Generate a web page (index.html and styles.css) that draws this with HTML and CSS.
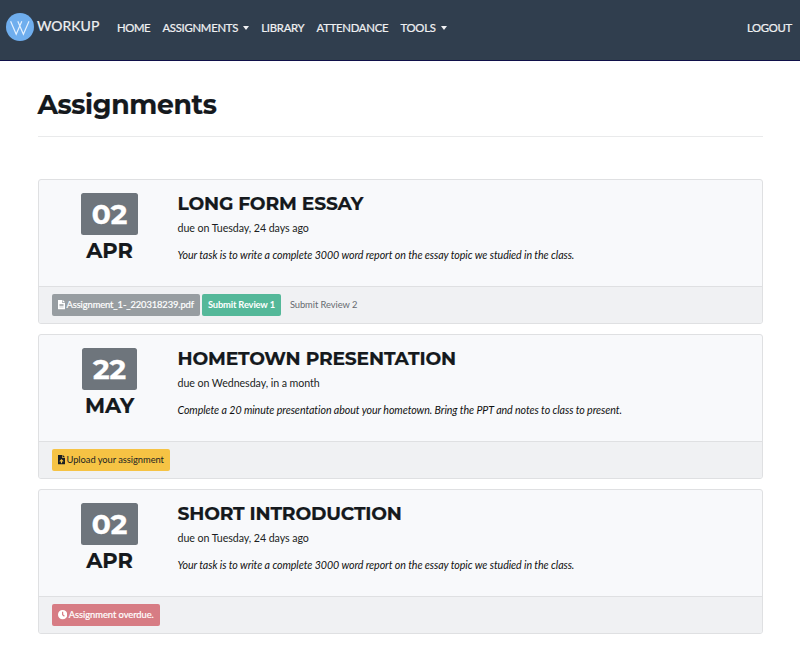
FILE: index.html
```html
<!DOCTYPE html>
<html lang="en">
<head>
<meta charset="utf-8">
<title>Workup - Assignments</title>
<link rel="stylesheet" href="styles.css">
</head>
<body>
<nav class="navbar">
  <a class="brand">
    <svg class="logo" viewBox="0 0 28 28"><circle cx="14" cy="14" r="14"/><path d="M4.6 8.3 10.2 21.2 15.8 8.3M11.8 8.3 17.4 21.2 23 8.3"/></svg>
    <span class="brand-name">WORKUP</span>
  </a>
  <div class="links">
    <a class="home">HOME</a>
    <a class="dropdown">ASSIGNMENTS</a>
    <a>LIBRARY</a>
    <a>ATTENDANCE</a>
    <a class="dropdown">TOOLS</a>
  </div>
  <a class="logout">LOGOUT</a>
</nav>
<main>
  <h1>Assignments</h1>
  <section class="card">
    <div class="card-body">
      <div class="date"><span class="day">02</span><span class="month">APR</span></div>
      <div class="info">
        <h2>LONG FORM ESSAY</h2>
        <p class="due">due on Tuesday, 24 days ago</p>
        <p class="task">Your task is to write a complete 3000 word report on the essay topic we studied in the class.</p>
      </div>
    </div>
    <div class="card-footer">
      <a class="btn file"><svg class="icon" viewBox="0 0 384 512"><path fill-rule="evenodd" d="M224 136V0H24C10 0 0 10 0 24v464c0 14 10 24 24 24h336c14 0 24-10 24-24V160H248c-14 0-24-10-24-24zM80 224h224v40H80zm0 70h224v40H80zm0 70h224v40H80zM384 122v6H256V0h6c7 0 13 3 17 7l98 98c4 4 7 10 7 17z"/></svg>Assignment_1-_220318239.pdf</a>
      <a class="btn review">Submit Review 1</a>
      <a class="btn plain">Submit Review 2</a>
    </div>
  </section>
  <section class="card">
    <div class="card-body">
      <div class="date"><span class="day narrow">22</span><span class="month">MAY</span></div>
      <div class="info">
        <h2>HOMETOWN PRESENTATION</h2>
        <p class="due">due on Wednesday, in a month</p>
        <p class="task">Complete a 20 minute presentation about your hometown. Bring the PPT and notes to class to present.</p>
      </div>
    </div>
    <div class="card-footer">
      <a class="btn upload"><svg class="icon" viewBox="0 0 384 512"><path fill-rule="evenodd" d="M224 136V0H24C10 0 0 10 0 24v464c0 14 10 24 24 24h336c14 0 24-10 24-24V160H248c-14 0-24-10-24-24zM289 352h-65v80c0 9-7 16-16 16h-32c-9 0-16-7-16-16v-80H95c-14 0-21-17-11-27l96-96c7-7 17-7 24 0l96 96c10 10 3 27-11 27zM384 122v6H256V0h6c7 0 13 3 17 7l98 98c4 4 7 10 7 17z"/></svg>Upload your assignment</a>
    </div>
  </section>
  <section class="card">
    <div class="card-body">
      <div class="date"><span class="day">02</span><span class="month">APR</span></div>
      <div class="info">
        <h2>SHORT INTRODUCTION</h2>
        <p class="due">due on Tuesday, 24 days ago</p>
        <p class="task">Your task is to write a complete 3000 word report on the essay topic we studied in the class.</p>
      </div>
    </div>
    <div class="card-footer">
      <a class="btn overdue"><svg class="icon clock" viewBox="0 0 18 18"><path fill-rule="evenodd" d="M9 0a9 9 0 1 0 0 18A9 9 0 0 0 9 0zM7.8 3.5h2.3v5.2l3 2.3-1.4 1.8-3.9-3z"/></svg>Assignment overdue.</a>
    </div>
  </section>
</main>
</body>
</html>
```
FILE: styles.css
```css
* { box-sizing: border-box; }
body { margin: 0; background: #fff; color: #1b1f23; font: 10.67px/16px Lato, sans-serif; }
h1, h2, p { margin: 0; }
h1, h2, .month, .day { font-family: Montserrat, Inter, sans-serif; font-weight: 700; color: #15191d; white-space: nowrap; -webkit-text-stroke: 0.2px currentColor; }
.navbar { height: 61px; background: #303e4e; border-bottom: 1px solid #10104a; display: flex; align-items: flex-start; padding: 13px 8px 0 6px; color: #f0f1f3; -webkit-text-stroke: 0.2px #f0f1f3; }
.brand { display: flex; width: 111px; gap: 3px; }
.logo { width: 28px; height: 28px; flex: none; }
.logo circle { fill: #6faeee; stroke: none; }
.logo path { fill: none; stroke: #e4f1ff; stroke-width: 1.2; }
.brand-name { font-size: 14px; line-height: 26px; }
.links { display: flex; gap: 12.2px; font-size: 11.33px; line-height: 30px; letter-spacing: -0.26px; flex: 1; white-space: nowrap; }
.home { letter-spacing: -0.4px; }
.logout { font-size: 11.33px; line-height: 30px; letter-spacing: -0.3px; }
.dropdown::after { content: ""; display: inline-block; margin-left: 5px; vertical-align: 2px; border: 3.5px solid transparent; border-width: 4px 3.5px 0; border-top-color: currentColor; }
main { padding: 26px 37px 0 37.5px; }
h1 { font-size: 26.67px; line-height: 36px; height: 50px; letter-spacing: -0.33px; border-bottom: 1px solid #e9eaeb; margin-bottom: 42px; }
.card { height: 145px; margin-bottom: 10px; border: 1px solid #dfe0e2; border-radius: 3px; background: #f8f9fb; overflow: hidden; }
.card-body { height: 106px; display: flex; padding: 13px 13px 0 12px; }
.date { width: 118px; margin-right: 9px; display: flex; flex-direction: column; align-items: center; }
.day { width: 57px; height: 42px; border-radius: 2.5px; background: #6e757c; color: #fff; font-size: 28px; line-height: 42px; text-align: center; -webkit-text-stroke-width: 0.4px; }
.narrow { width: 55px; }
.month { font-size: 21px; line-height: 32px; }
h2 { font-size: 18.67px; line-height: 22px; letter-spacing: -0.16px; }
.due { margin-top: 5px; letter-spacing: -0.07px; }
.task { margin-top: 11px; font-style: italic; color: #111; white-space: nowrap; letter-spacing: -0.08px; }
.card-footer { height: 38px; border-top: 1px solid #dfe0e2; background: #f0f1f3; padding: 7px 13px; display: flex; gap: 2px; }
.btn { height: 22px; padding: 0 6px; border-radius: 2px; font-size: 9.33px; line-height: 22px; color: #fff; display: flex; align-items: center; white-space: nowrap; letter-spacing: -0.04px; }
.icon { height: 9.33px; width: 7px; margin-right: 2px; fill: currentColor; flex: none; }
.clock { width: 9.33px; }
.file { background: #979da1; letter-spacing: -0.09px; -webkit-text-stroke: 0.2px #fff; }
.review { background: #54b899; font-weight: 700; letter-spacing: -0.15px; }
.plain { color: #666b70; letter-spacing: -0.06px; padding-left: 7px; }
.upload { background: #f6c344; color: #1b1f23; }
.overdue { background: #d77c84; -webkit-text-stroke: 0.2px #fff; }
```
